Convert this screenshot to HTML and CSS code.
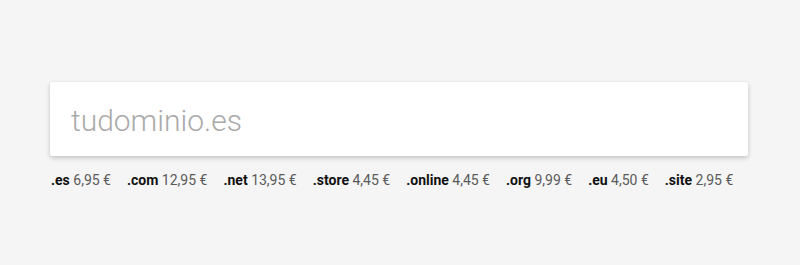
FILE: index.html
```html
<!DOCTYPE html>
<html lang="es">
<head>
<meta charset="utf-8">
<link rel="stylesheet" href="styles.css">
</head>
<body>
<div class="wrap">
  <div class="search">
    <input class="search-input" type="text" placeholder="tudominio.es">
  </div>
  <ul class="tlds">
    <li><b>.es</b> 6,95 €</li>
    <li><b>.com</b> 12,95 €</li>
    <li><b>.net</b> 13,95 €</li>
    <li><b>.store</b> 4,45 €</li>
    <li><b>.online</b> 4,45 €</li>
    <li><b>.org</b> 9,99 €</li>
    <li><b>.eu</b> 4,50 €</li>
    <li><b>.site</b> 2,95 €</li>
  </ul>
</div>
</body>
</html>
```

FILE: styles.css
```css
html, body {
  margin: 0;
  padding: 0;
  background: #f5f5f5;
  font-family: Roboto, "Liberation Sans", sans-serif;
}
.wrap {
  width: 698px;
  margin: 82px 0 0 50px;
}
.search {
  background: #fff;
  border-radius: 2px;
  box-shadow: 0 2px 5px rgba(0,0,0,0.2), 0 0 2px rgba(0,0,0,0.05);
  height: 74px;
  display: flex;
  align-items: center;
}
.search-input {
  border: 0;
  outline: none;
  background: transparent;
  width: 100%;
  padding: 2px 0 0 21px;
  font-family: Roboto, "Liberation Sans", sans-serif;
  font-size: 30px;
  font-weight: 300;
  color: #333;
}
.search-input::placeholder {
  color: #aaaaaa;
}
.tlds {
  list-style: none;
  margin: 0;
  padding: 16px 0 0 1px;
  display: flex;
  gap: 16px;
  font-size: 14px;
  color: #5a5a5a;
}
.tlds b {
  color: #111;
  font-weight: 700;
}
```
